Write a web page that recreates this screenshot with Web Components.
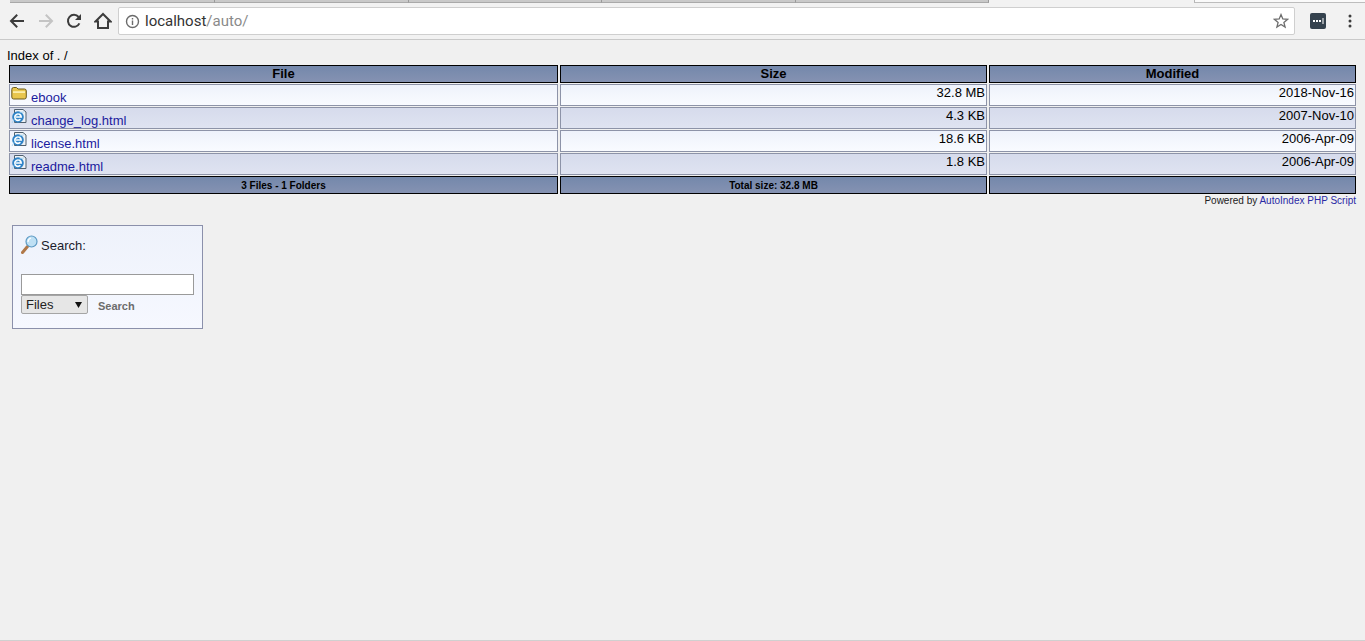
<!DOCTYPE html>
<html>
<head>
<meta charset="utf-8">
<title>Index of ./</title>
<style>
  html, body { margin: 0; height: 100%; }
  body { background: #f0f0f0; font: 13px "Liberation Sans", Arial, sans-serif; overflow: hidden; }
  body { display: flex; flex-direction: column; height: 641px; }
  index-page { flex: 1; }
</style>
</head>
<body>
<browser-bar url-host="localhost" url-path="/auto/"></browser-bar>
<index-page>
  <index-table>
    <index-row kind="head"><span>File</span><span>Size</span><span>Modified</span></index-row>
    <index-row icon="folder" href="#" shade="light"><span>ebook</span><span>32.8 MB</span><span>2018-Nov-16</span></index-row>
    <index-row icon="html" href="#" shade="dark"><span>change_log.html</span><span>4.3 KB</span><span>2007-Nov-10</span></index-row>
    <index-row icon="html" href="#" shade="light"><span>license.html</span><span>18.6 KB</span><span>2006-Apr-09</span></index-row>
    <index-row icon="html" href="#" shade="dark"><span>readme.html</span><span>1.8 KB</span><span>2006-Apr-09</span></index-row>
    <index-row kind="foot"><span>3 Files - 1 Folders</span><span>Total size: 32.8 MB</span><span></span></index-row>
  </index-table>
  <search-box></search-box>
</index-page>

<script>
const barTemplate = document.createElement('template');
barTemplate.innerHTML = `
  <style>
    :host { display: block; height: 40px; background: #f2f2f2; border-bottom: 1px solid #c9c9c9; box-sizing: border-box; flex: none; }
    .tabs { display: flex; height: 3px; padding-left: 10px; }
    .tabs i { display: block; height: 3px; background: #c9c9c9; border-bottom: 1px solid #a9a9a9; border-right: 1px solid #9a9a9a; box-sizing: border-box; width: 193.5px; }
    .tabs i:first-child { width: 205px; }
    .tabs b { display: block; width: 205px; }
    .tabs em { display: block; flex: 1; height: 3px; background: #fafafa; border-left: 1px solid #b5b5b5; border-bottom: 1px solid #bdbdbd; box-sizing: border-box; }
    .row { display: flex; align-items: center; height: 36px; padding: 0 0 0 3px; box-sizing: border-box; }
    .btn { width: 28.5px; height: 28px; display: flex; align-items: center; justify-content: center; flex: none; }
    .url { flex: 1; height: 28px; margin-left: 1px; margin-top: 0; background: #fff; border: 1px solid #cfcfcf; border-radius: 2px; box-sizing: border-box;
      display: flex; align-items: center; padding: 0 5px 0 6px; font: 15px Roboto, "Liberation Sans", sans-serif; color: #333; }
    .url svg.info { margin-right: 5px; }
    .url .path { color: #8a8a8a; }
    .url .sp { flex: 1; }
    .ext { margin-left: 7px; width: 32px; display: flex; justify-content: center; flex: none; }
    .menu { width: 31px; display: flex; justify-content: center; flex: none; }
  </style>
  <div class="tabs"><i></i><i></i><i></i><i></i><i></i><b></b><em></em></div>
  <div class="row">
    <div class="btn"><svg width="16" height="16" viewBox="0 0 16 16"><path d="M15 8H2.5M8.2 1.8 2 8l6.2 6.2" fill="none" stroke="#3c3c3c" stroke-width="2"/></svg></div>
    <div class="btn"><svg width="16" height="16" viewBox="0 0 16 16"><path d="M1 8h12.5M7.8 1.8 14 8l-6.2 6.2" fill="none" stroke="#c4c4c4" stroke-width="2"/></svg></div>
    <div class="btn"><svg width="16" height="16" viewBox="0 0 16 16"><path d="M13.4 10.4A6 6 0 1 1 12.6 4" fill="none" stroke="#3c3c3c" stroke-width="2"/><path d="M15 1v6H9z" fill="#3c3c3c"/></svg></div>
    <div class="btn"><svg width="18" height="18" viewBox="0 0 18 18"><path d="M9 2 1.5 9.5H4V16h10V9.5h2.5z" fill="none" stroke="#3c3c3c" stroke-width="2" stroke-linejoin="miter"/></svg></div>
    <div class="url">
      <svg class="info" width="15" height="15" viewBox="0 0 15 15"><circle cx="7.5" cy="7.5" r="6" fill="none" stroke="#6b6b6b" stroke-width="1.4"/><path d="M6.8 6.6h1.4v4.4H6.800zM6.800 4h1.400v1.400H6.800z" fill="#6b6b6b"/></svg>
      <span id="host"></span><span class="path" id="path"></span>
      <span class="sp"></span>
      <svg width="16" height="16" viewBox="0 0 16 16"><path d="M8 1.600 9.800 6 14.600 6.300 10.900 9.400 12.100 14.100 8 11.500 3.900 14.100 5.100 9.400 1.400 6.300 6.200 6z" fill="none" stroke="#6e6e6e" stroke-width="1.300"/></svg>
    </div>
    <div class="ext"><svg width="16" height="16" viewBox="0 0 16 16"><rect width="16" height="16" rx="2" fill="#35424e"/><path d="M3 7h2v2H3zM6 7h2v2H6zM9 7h2v2H9zM12.500 5h1v6h-1z" fill="#fff"/></svg></div>
    <div class="menu"><svg width="4" height="14" viewBox="0 0 4 14"><circle cx="2" cy="2" r="1.500" fill="#3c3c3c"/><circle cx="2" cy="7" r="1.500" fill="#3c3c3c"/><circle cx="2" cy="12" r="1.500" fill="#3c3c3c"/></svg></div>
  </div>
`;

class BrowserBar extends HTMLElement {
  connectedCallback() {
    this._shadowRoot = this.attachShadow({ mode: 'open' });
    this._shadowRoot.appendChild(barTemplate.content.cloneNode(true));
    this._shadowRoot.getElementById('host').textContent = this.getAttribute('url-host');
    this._shadowRoot.getElementById('path').textContent = this.getAttribute('url-path');
  }
}

const pageTemplate = document.createElement('template');
pageTemplate.innerHTML = `
  <style>
    :host { display: block; border-bottom: 1px solid #d0d0d0; box-sizing: border-box; color: #000; }
    .title { padding: 8px 0 0 7px; height: 17px; line-height: 15px; box-sizing: content-box; height: 15px; }
    .wrap { padding: 2px 9px 0 9px; }
  </style>
  <div class="title">Index of . /</div>
  <div class="wrap"><slot></slot></div>
`;

class IndexPage extends HTMLElement {
  connectedCallback() {
    this.attachShadow({ mode: 'open' }).appendChild(pageTemplate.content.cloneNode(true));
  }
}

const tableTemplate = document.createElement('template');
tableTemplate.innerHTML = `
  <style>
    :host { display: flex; flex-direction: column; gap: 1px; width: 1347px; }
    .powered { text-align: right; font-size: 10px; line-height: 12px; margin-top: 0; padding-right: 0; color: #222; }
    .powered a { color: #2a2aa5; text-decoration: none; }
  </style>
  <slot></slot>
  <div class="powered">Powered by <a href="#">AutoIndex PHP Script</a></div>
`;

class IndexTable extends HTMLElement {
  connectedCallback() {
    this.attachShadow({ mode: 'open' }).appendChild(tableTemplate.content.cloneNode(true));
  }
}

const folderIcon = `<svg width="16" height="14" viewBox="0 0 16 14"><path d="M.8 3.500Q.8 1.500 2.500 1.500H5.500L7 3H13.500Q15.300 3 15.300 5V11Q15.300 13 13.500 13H2.500Q.8 13 .8 11Z" fill="#e8c64e" stroke="#6b5a1c" stroke-width="1"/><path d="M2 5.200H14V7H2z" fill="#fbeeac"/></svg>`;
const htmlIcon = `<svg width="16" height="16" viewBox="0 0 16 16"><path d="M3.500.5H12L15 3V13.500H3.500z" fill="#eef2f6" stroke="#50606e"/><circle cx="7" cy="8" r="5.800" fill="#2f83c7"/><path d="M3.800 8H10.200A3.200 3.200 0 1 0 9.400 10.300" fill="none" stroke="#fff" stroke-width="1.600"/><path d="M1 14Q7 2 13 3" fill="none" stroke="#9cd0f0" stroke-width=".8"/></svg>`;

class IndexRow extends HTMLElement {
  connectedCallback() {
    const kind = this.getAttribute('kind') || 'item';
    const shade = this.getAttribute('shade') || 'light';
    const bg = shade === 'dark' ? 'linear-gradient(#d6dbec, #dfe3f1)' : 'linear-gradient(#eef2fb, #f9fbff)';
    const root = this.attachShadow({ mode: 'open' });
    const cells = [...this.children].map((c) => c.textContent);
    const icon = this.getAttribute('icon') === 'folder' ? folderIcon : htmlIcon;
    let html = `
      <style>
        :host { display: grid; grid-template-columns: 549px 427px 367px; gap: 2px; }
        .c { box-sizing: border-box; overflow: hidden; white-space: nowrap; }
        .head { height: 18px; background: linear-gradient(#7488ab, #8592b2); border: 1px solid #000; font-weight: bold; font-size: 13px; line-height: 16px; text-align: center; }
        .foot { height: 18px; background: linear-gradient(#7488ab, #8592b2); border: 1px solid #000; font-weight: bold; font-size: 10px; line-height: 17px; text-align: center; }
        .item { height: 22px; background: ${bg}; border: 1px solid #8d93a8; line-height: 16px; }
        .name { display: flex; align-items: flex-start; padding: 1px 0 0 1px; }
        .name svg { flex: none; }
        .name a { margin: 4px 0 0 4px; color: #1b1b9e; text-decoration: none; line-height: 16px; }
        .num { text-align: right; padding-right: 1px; }
      </style>`;
    if (kind === 'item') {
      html += `<div class="c item name">${icon}<a href="${this.getAttribute('href')}">${cells[0]}</a></div>
        <div class="c item num">${cells[1]}</div>
        <div class="c item num">${cells[2]}</div>`;
    } else {
      html += cells.map((t) => `<div class="c ${kind}">${t}</div>`).join('');
    }
    root.innerHTML = html;
  }
}

const searchTemplate = document.createElement('template');
searchTemplate.innerHTML = `
  <style>
    :host { display: block; width: 191px; height: 104px; box-sizing: border-box; margin: 18px 0 0 3px; border: 1px solid #8b90ab;
      background: linear-gradient(#eef2fb, #f6f8ff); padding: 8px 8px 0; color: #1c1c2c; }
    .lbl { display: flex; align-items: flex-end; height: 20px; gap: 3px; }
    .lbl span { line-height: 15px; position: relative; top: -1px; }
    input { display: block; width: 173px; height: 21px; margin: 20px 0 0; padding: 0; box-sizing: border-box; background: #fff; border: 1px solid #9a9a9a; outline: 0; }
    .controls { display: flex; align-items: center; height: 19px; }
    .sel { width: 67px; height: 19px; box-sizing: border-box; border: 1px solid #a5a5a5; border-radius: 2px; background: #e6e6e6; display: flex; align-items: center;
      justify-content: space-between; padding: 0 5px 0 4px; font-size: 13px; color: #222; }
    .sel svg { flex: none; }
    button { background: none; border: 0; padding: 0; margin: 3px 0 0 10px; font: bold 11px "Liberation Sans", Arial, sans-serif; color: #6c6c6c; }
  </style>
  <div class="lbl">
    <svg width="17" height="19" viewBox="0 0 17 19"><path d="M1.500 17.500 6.500 11.500" stroke="#b07848" stroke-width="3" stroke-linecap="round"/><circle cx="10.500" cy="6.500" r="5.500" fill="#bfe0f4" stroke="#5c9ac4" stroke-width="1.200"/><path d="M7 7Q7 4 10 3" fill="none" stroke="#fff" stroke-width="1.200"/></svg>
    <span>Search:</span>
  </div>
  <input type="text">
  <div class="controls">
    <div class="sel"><span>Files</span><svg width="7" height="6" viewBox="0 0 7 6"><path d="M0 0h7L3.500 6z" fill="#111"/></svg></div>
    <button>Search</button>
  </div>
`;

class SearchBox extends HTMLElement {
  connectedCallback() {
    this.attachShadow({ mode: 'open' }).appendChild(searchTemplate.content.cloneNode(true));
  }
}

customElements.define('browser-bar', BrowserBar);
customElements.define('index-page', IndexPage);
customElements.define('index-table', IndexTable);
customElements.define('index-row', IndexRow);
customElements.define('search-box', SearchBox);
</script>
</body>
</html>
